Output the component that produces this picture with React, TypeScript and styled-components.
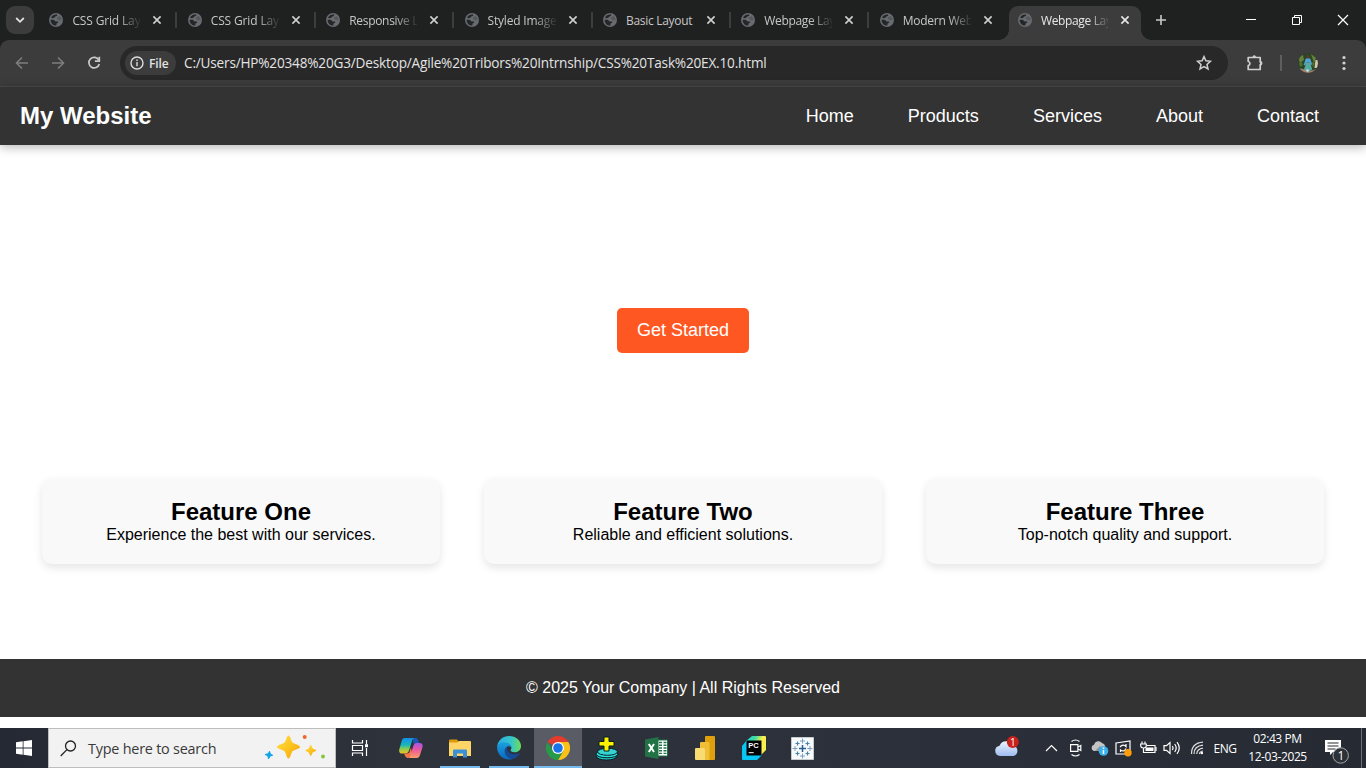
import React from 'react';
import styled, { createGlobalStyle } from 'styled-components';

const Global = createGlobalStyle`
  * { box-sizing: border-box; margin: 0; padding: 0; }
  html, body { width: 1366px; height: 768px; overflow: hidden; background: #fff; }
  svg { display: block; flex: none; }
`;

const ui = `'Open Sans', 'Noto Sans', sans-serif`;

const Screen = styled.div`
  width: 1366px;
  height: 768px;
  display: flex;
  flex-direction: column;
  overflow: hidden;
`;

/* ---------- Browser chrome ---------- */
const TabStrip = styled.div`
  height: 40px;
  flex: none;
  display: flex;
  align-items: center;
  background: #1f2020;
  padding-left: 6px;
  font-family: ${ui};
`;
const TabSearch = styled.div`
  width: 28px;
  height: 28px;
  margin-right: 6.4px;
  border-radius: 9px;
  background: #3c3c3c;
  display: flex;
  align-items: center;
  justify-content: center;
`;
const Tab = styled.div<{ $active?: boolean }>`
  position: relative;
  width: ${p => (p.$active ? 132 : 138.4)}px;
  height: ${p => (p.$active ? 34 : 40)}px;
  margin: ${p => (p.$active ? '6px 0 0 -0.2px' : '0')};
  padding: ${p => (p.$active ? '0 0 6px 9px' : '0 0 0 9px')};
  display: flex;
  align-items: center;
  flex: none;
  background: ${p => (p.$active ? '#3c3c3c' : 'transparent')};
  border-radius: 9px 9px 0 0;
  &::before, &::after {
    content: '';
    display: ${p => (p.$active ? 'block' : 'none')};
    position: absolute;
    bottom: 0;
    width: 10px;
    height: 10px;
  }
  &::before { left: -10px; background: radial-gradient(circle at 0 0, transparent 9.5px, #3c3c3c 10px); }
  &::after { right: -10px; background: radial-gradient(circle at 100% 0, transparent 9.5px, #3c3c3c 10px); }
`;
const TabTitle = styled.span<{ $active?: boolean; $spacing: number; $fade: boolean }>`
  width: ${p => (p.$active ? 67 : 68)}px;
  margin-left: 9px;
  margin-right: 12px;
  padding-top: 2px;
  overflow: hidden;
  white-space: nowrap;
  font-size: 12px;
  line-height: 16px;
  letter-spacing: ${p => p.$spacing}px;
  color: ${p => (p.$active ? '#e8e8e8' : '#c7c7c7')};
  ${p => p.$fade && 'mask-image: linear-gradient(90deg, #000 46px, transparent 70px);'}
`;
const TabDivider = styled.i`
  width: 2px;
  height: 16px;
  margin-left: 13px;
  background: #3c3d3d;
`;
const NewTab = styled.div`
  width: 14px;
  margin-left: 13px;
`;
const WindowButtons = styled.div`
  margin-left: auto;
  display: flex;
  align-items: center;
  svg { width: 46px; height: 30px; }
`;
const ToolbarBack = styled.div`
  height: 47px;
  flex: none;
  background: #1f2020;
`;
const Toolbar = styled.div`
  height: 47px;
  display: flex;
  align-items: center;
  background: #3c3c3c;
  border-radius: 9px 9px 0 0;
  border-bottom: 1px solid #4b4a4b;
  padding-left: 14px;
  font-family: ${ui};
`;
const NavIcons = styled.div`
  display: flex;
  gap: 20px;
  width: 106px;
`;
const AddressBar = styled.div`
  width: 1108px;
  height: 34px;
  display: flex;
  align-items: center;
  border-radius: 17px;
  background: #282828;
  padding: 0 15px 0 5px;
`;
const FileChip = styled.div`
  width: 51px;
  height: 24px;
  display: flex;
  align-items: center;
  gap: 5px;
  padding-left: 5px;
  border-radius: 12px;
  background: #3c3c3c;
  color: #e3e3e3;
  font-size: 12px;
  font-weight: 600;
  letter-spacing: -0.1px;
`;
const Url = styled.span`
  flex: 1;
  margin-left: 8px;
  color: #e3e3e3;
  font-size: 13.6px;
  line-height: 20px;
  letter-spacing: -0.186px;
  white-space: nowrap;
`;
const ToolbarActions = styled.div`
  display: flex;
  align-items: center;
  margin-left: 18px;
`;
const ActionDivider = styled.i`
  width: 2px;
  height: 16px;
  margin: 0 16px 0 16px;
  background: #5e5e5e;
`;

/* ---------- Web page ---------- */
const Page = styled.main`
  flex: 1;
  display: flex;
  flex-direction: column;
  background: #fff;
  font-family: Arial, 'Liberation Sans', sans-serif;
  color: #000;
`;
const Header = styled.header`
  height: 58px;
  flex: none;
  display: flex;
  justify-content: space-between;
  align-items: center;
  padding: 0 47px 0 20px;
  background: #333;
  color: #fff;
  box-shadow: 0 2px 10px rgba(0, 0, 0, 0.3);
`;
const Brand = styled.div`
  font-size: 24px;
  font-weight: bold;
  line-height: 28px;
`;
const Menu = styled.nav`
  display: flex;
  gap: 54px;
  font-size: 18px;
  line-height: 20px;
`;
const Hero = styled.section`
  height: 313px;
  flex: none;
  display: flex;
  justify-content: center;
  padding-top: 163px;
`;
const CallToAction = styled.a`
  width: 132px;
  height: 45px;
  border-radius: 5px;
  background: #ff5722;
  color: #fff;
  font-size: 18px;
  line-height: 44px;
  text-align: center;
`;
const Features = styled.section`
  height: 201px;
  flex: none;
  display: flex;
  justify-content: space-around;
  align-items: flex-start;
  padding: 20px;
`;
const Card = styled.article`
  width: 30%;
  height: 86px;
  padding: 20px;
  border-radius: 10px;
  background: #f9f9f9;
  box-shadow: 0 4px 8px rgba(0, 0, 0, 0.1);
  text-align: center;
  h2 { font-size: 24px; line-height: 27px; }
  p { padding-top: 1px; font-size: 16px; line-height: 18px; }
`;
const Footer = styled.footer`
  height: 58px;
  flex: none;
  background: #333;
  color: #fff;
  font-size: 16px;
  line-height: 57px;
  text-align: center;
`;

/* ---------- Taskbar ---------- */
const Taskbar = styled.div`
  height: 40px;
  flex: none;
  display: flex;
  align-items: stretch;
  background: linear-gradient(90deg, #242934 0, #2d323b 400px, #2b303a 900px, #252a33 1366px);
  color: #fff;
  font-family: ${ui};
`;
const StartButton = styled.div`
  width: 48px;
  display: flex;
  align-items: center;
  justify-content: center;
`;
const SearchBox = styled.div`
  width: 288px;
  display: flex;
  align-items: center;
  padding: 0 9px 0 11px;
  background: #f2f2f2;
  border: 1px solid #bdbdbd;
  color: #3a3a3a;
  font-size: 14.4px;
  letter-spacing: -0.22px;
  span { flex: 1; margin-left: 11px; }
`;
const Apps = styled.div`
  display: flex;
  gap: 1px;
`;
const TaskButton = styled.div<{ $state?: 'open' | 'active'; $gap?: number }>`
  width: 48px;
  margin-right: ${p => p.$gap ?? 0}px;
  display: flex;
  align-items: center;
  justify-content: center;
  background-color: ${p => (p.$state === 'active' ? '#595c64' : 'transparent')};
  background-image: ${p => (p.$state ? 'linear-gradient(#76b9ed, #76b9ed)' : 'none')};
  background-repeat: no-repeat;
  background-position: center bottom;
  background-size: ${p => (p.$state === 'active' ? 48 : 40)}px 2px;
`;
const Tray = styled.div`
  margin-left: auto;
  display: flex;
  align-items: center;
`;
const TrayItem = styled.div<{ $w: number }>`
  width: ${p => p.$w}px;
  display: flex;
  justify-content: center;
`;
const Language = styled.span`
  width: 32px;
  font-size: 12px;
  letter-spacing: -0.4px;
  text-align: center;
`;
const Clock = styled.div`
  width: 73px;
  font-size: 12px;
  line-height: 18px;
  letter-spacing: -0.4px;
  text-align: center;
  white-space: nowrap;
`;
const ShowDesktop = styled.i`
  align-self: stretch;
  width: 5px;
  margin-left: 2px;
  border-left: 1px solid #6b6f76;
`;

/* ---------- Icons ---------- */
const Globe = () => (
  <svg width="14" height="14" viewBox="2 2 20 20">
    <circle cx="12" cy="12" r="10" fill="#686b70" />
    <path d="M4.300 11.500h4.200c1.600 0 1.700 2.600 3.300 2.600h2.500c1.300 0 1.200 2-.1 2.300-1.300.2-1.600.8-1.600 2.300v1.200C7.600 20 4.200 16.300 4.300 11.500z" fill="#242627" />
    <path d="M5 8.500C6.500 5.700 9 4.300 12 4.100c1 0 1.800.2 1.800.2 0 2.200-.8 2.500-2.600 2.600-1.500.1-.8 2-2.200 2.100H7.500C6.800 9.200 6.500 10 5 8.500z" fill="#242627" />
    <path d="M15.500 7.500c1-.5 1.500-1.200 1.500-1.200 2 1.500 3 3.700 2.800 6.200h-3c-1.600 0-1.200-1.800-2.700-2-1.700-.2-1.300-2.400 1.400-3z" fill="#54575b" />
  </svg>
);
const Close = ({ color = '#d0d0d0' }: { color?: string }) => (
  <svg width="10" height="10" viewBox="0 0 10 10" stroke={color} strokeWidth="1.6">
    <path d="M1.400 1.400l7.200 7.200M8.600 1.400l-7.200 7.200" />
  </svg>
);
const Arrow = ({ flip }: { flip?: boolean }) => (
  <svg width="16" height="16" viewBox="0 0 16 16" fill="none" stroke="#7d7d7d" strokeWidth="1.6" transform={flip ? 'scale(-1 1)' : undefined}>
    <path d="M14 8H3M8 2.500L2.500 8 8 13.500" />
  </svg>
);
const Reload = () => (
  <svg width="16" height="16" viewBox="0 0 16 16" fill="none" stroke="#c9c9c9" strokeWidth="1.700">
    <path d="M12.800 5A5.300 5.300 0 1 0 13.300 9" />
    <path d="M13.300 1.800v4.400H8.900" />
  </svg>
);
const Info = () => (
  <svg width="14" height="14" viewBox="0 0 14 14" fill="none" stroke="#dcdcdc" strokeWidth="1.400">
    <circle cx="7" cy="7" r="6" /><path d="M7 6v4.200M7 3.500v1.500" />
  </svg>
);
const Star = () => (
  <svg width="18" height="18" viewBox="0 0 18 18" fill="none" stroke="#cfcfcf" strokeWidth="1.500">
    <path d="M9 2.600l1.900 4.200 4.500.5-3.400 3.100 1 4.600L9 12.700 5 15l1-4.600L2.600 7.300l4.500-.5z" />
  </svg>
);
const Puzzle = () => (
  <svg width="18" height="18" viewBox="0 0 18 18" fill="none" stroke="#cfcfcf" strokeWidth="1.700" strokeLinejoin="round">
    <path d="M2.200 3.500h12v4.500h1v2.500h-1v5h-12v-4c2.300-.2 2.300-3.700 0-4z" />
    <path d="M6.800 3.200c0-2.200 3-2.200 3 0zM14.500 7.700c2.200 0 2.200 3 0 3z" fill="#cfcfcf" strokeWidth=".5" />
  </svg>
);
const Avatar = () => (
  <svg width="20" height="20" viewBox="0 0 20 20">
    <clipPath id="avatar"><circle cx="10" cy="10" r="10" /></clipPath>
    <g clipPath="url(#avatar)">
      <path d="M0 0h20v20H0z" fill="#2b4428" />
      <path d="M0 4l5-2 1 5-4 3zM13 1l5 4-2 5z" fill="#66813c" />
      <path d="M1 10l3-1 1 3-3 2zM14 9l3 1-2 5z" fill="#50702f" />
      <path d="M17.500 7h3v8h-4z" fill="#d6c6ac" /><path d="M0 15l5 1 6 2 5-1 4-2v6H0z" fill="#a67e6b" />
      <circle cx="10" cy="3.500" r="1.600" fill="#5a3c2c" />
      <path d="M7.800 5.500h4.400l2 6-1.500.5-1-2.500H8.500l-1.300 3-1.500-.5z" fill="#51a4d6" />
      <path d="M8.200 9.500h4l2 7-3 2H8.500l-2.500-2z" fill="#57aaa0" />
      <circle cx="9.500" cy="17.500" r="1.200" fill="#d8e4e2" />
    </g>
  </svg>
);
const WindowsLogo = () => (
  <svg width="16" height="16" viewBox="0 0 16 16" fill="#fff">
    <path d="M0 2.200L6.700 1.300V7.500H0zM7.500 1.200L16 0v7.500H7.500zM0 8.400h6.700v6.300L0 13.800zM7.500 8.400H16V16l-8.500-1.200z" />
  </svg>
);
const SearchIcon = () => (
  <svg width="17" height="17" viewBox="0 0 17 17" fill="none" stroke="#222" strokeWidth="1.300">
    <circle cx="10.500" cy="6" r="5" /><path d="M6.900 9.600L.7 16" />
  </svg>
);
const Sparkles = () => (
  <svg width="62" height="26" viewBox="0 0 62 26">
    <defs><linearGradient id="spark" x1="0" y1="0" x2="1" y2="1"><stop stopColor="#ffe04b" /><stop offset=".55" stopColor="#fcc21b" /><stop offset="1" stopColor="#f39b13" /></linearGradient></defs>
    <path d="M24.500.5c1.800 0 2.700 5.500 4 7 1.500 1.500 7.500 2.500 7.500 4.500s-6 2.600-7.500 4.200c-1.400 1.500-2.200 7.300-4 7.300s-2.500-5.800-4-7.300C19 14.600 13 14 13 12s6-3 7.500-4.500 2.200-7 4-7z" fill="url(#spark)" />
    <path d="M46.700 10c.9 0 1.300 2.700 2 3.500.800.700 3.500 1 3.500 2s-2.700 1.200-3.500 2-1.100 3.500-2 3.500-1.200-2.700-2-3.500-3.300-1-3.300-2 2.500-1.300 3.300-2 1.100-3.500 2-3.500z" fill="url(#spark)" />
    <path d="M5.500 16c.8 0 .8 2.100 1.500 2.800s2.300 1 2 1.800-2 .4-2.700 1.100S5.500 24 4.500 24s-.5-1.900-1-2.600S.7 20.300 1 19.300s2-.3 2.800-1S4.700 16 5.500 16z" fill="#12a5e8" />
    <circle cx="40.700" cy="2" r="2" fill="#f0652b" /><circle cx="59" cy="21.500" r="2" fill="#86c540" />
  </svg>
);
const TaskView = () => (
  <svg width="18" height="16" viewBox="0 0 18 16" fill="none" stroke="#fff" strokeWidth="1.200">
    <path d="M1.500 0v3h10V0M1.500 5.500h10v5h-10zM1.500 16v-3h10v3M15.500 0v4M15.500 8v8" /><path d="M14 4.200h3v3h-3z" fill="#fff" stroke="none" />
  </svg>
);
const Copilot = () => (
  <svg width="24" height="22" viewBox="0 0 24 22">
    <defs>
      <linearGradient id="cpA" x1="0" y1="0" x2="0" y2="1"><stop stopColor="#168fe7" /><stop offset=".45" stopColor="#16b7bb" /><stop offset=".7" stopColor="#8acb50" /><stop offset="1" stopColor="#f4be24" /></linearGradient>
      <linearGradient id="cpB" x1="0" y1="0" x2="0" y2="1"><stop stopColor="#a454e8" /><stop offset=".45" stopColor="#ea59a0" /><stop offset="1" stopColor="#fc9e64" /></linearGradient>
    </defs>
    <path d="M14 1h2.500c2 0 2.500 1.500 3 3l.8 2.500h-6z" fill="#1958b9" />
    <path d="M5.800 1H16c-2 0-2.500 1.500-3 3l-3 9.500c-.7 2-1.700 3-4 3H3c-2.500 0-3.300-2-2.600-4.500l2.300-8C3.300 2 4 1 5.800 1z" fill="url(#cpA)" />
    <path d="M5 16.500h3c2 0 2.500-1 3-3l1-3 1.500 8L9 21c-2.300 0-2.700-1.800-4-4.500z" fill="#f57645" />
    <path d="M17.500 6h3.300c2.500 0 3.300 2 2.600 4.500L21 18c-.6 2-1.500 3-3.500 3H8.500c1.700 0 2.400-1.300 3-3L14.300 9c.6-2 1.400-3 3.200-3z" fill="url(#cpB)" />
  </svg>
);
const Explorer = () => (
  <svg width="22" height="19" viewBox="0 0 22 19">
    <path d="M0 1.500Q0 .5 1 .5h7l1.500 2H20v5H0z" fill="#dc9a0b" />
    <path d="M0 3.500h8.500l1.500-1.500H21q1 0 1 1V17H0z" fill="#ffd568" />
    <path d="M4 18.500v-7q0-1 1-1h12q1 0 1 1v7h-4v-4H8v4z" fill="#3b91d6" />
  </svg>
);
const Edge = () => (
  <svg width="24" height="24" viewBox="0 0 24 24">
    <defs><linearGradient id="edA"><stop stopColor="#2eaae2" /><stop offset=".6" stopColor="#35c6cb" /><stop offset="1" stopColor="#70dc53" /></linearGradient>
    <linearGradient id="edB" x1="0" y1="0" x2="0" y2="1"><stop stopColor="#1ba1df" /><stop offset="1" stopColor="#0868bd" /></linearGradient></defs>
    <path d="M.2 10C1.300 4 6 0 12 0c7 0 12 4.700 12 10 0 4-3 6.300-6.500 6.300-3 0-4-1.200-4-2 0-.6.900-1 .9-2.600C14.400 9 11.800 7 8.200 7 4.500 7 1.500 8.500.2 10z" fill="url(#edA)" />
    <path d="M.2 10C2 7 5 6 8.200 6.400c4.400.5 6.200 3 6.200 5.300-1-1.200-2.500-1.700-3.700-1.200-3.500 1.400-4 8.500 4.300 12.700C6.500 25-.8 18.700.2 10z" fill="url(#edB)" />
    <path d="M10.700 10.500c-6 3-2.700 11.500 4.300 12.700 3.500-.8 6-2.800 7.600-5.300.3-.6 0-1-.6-.6-5 2.300-10 .5-11.600-3-.5-1.300-.4-2.700.3-3.800z" fill="#164a94" />
  </svg>
);
const Chrome = () => (
  <svg width="24" height="24" viewBox="0 0 24 24">
    <path d="M12 12L1.600 6A12 12 0 0 1 22.400 6z" fill="#e33b2e" />
    <path d="M12 6h10.400A12 12 0 0 1 12 24l5.200-9z" fill="#fbc116" />
    <path d="M1.600 6A12 12 0 0 0 12 24l5.200-9L12 12 6.800 15z" fill="#269a48" />
    <circle cx="12" cy="12" r="6" fill="#fff" /><circle cx="12" cy="12" r="4.800" fill="#1a73e8" />
  </svg>
);
const DiscPlus = () => (
  <svg width="25" height="25" viewBox="0 0 25 25" stroke="#071e20" strokeWidth="1">
    <ellipse cx="11.500" cy="20.500" rx="10" ry="3.500" fill="#22c9c9" /><ellipse cx="12" cy="18" rx="11" ry="3.800" fill="#29e0df" /><ellipse cx="12.500" cy="15.800" rx="10" ry="3.500" fill="#37d3d3" />
    <path d="M9 1h5v4.500h5V10h-5v5H9v-5H4V5.500h5z" fill="#fff200" />
  </svg>
);
const Excel = () => (
  <svg width="23" height="22" viewBox="0 0 23 22">
    <path d="M12 3h10.500v16H12z" fill="#fff" stroke="#217346" />
    <path d="M14 5.500h3M18.500 5.500h3M14 8.200h3M18.500 8.200h3M14 11h3M18.500 11h3M14 13.700h3M18.500 13.700h3M14 16.400h3M18.500 16.400h3" stroke="#217346" strokeWidth="1.400" />
    <path d="M0 2.500L13.500 0v22L0 19.500z" fill="#217346" />
    <path d="M3.800 7l5.200 8M9 7l-5.200 8" stroke="#fff" strokeWidth="2" />
  </svg>
);
const PowerBi = () => (
  <svg width="20" height="24" viewBox="0 0 20 24">
    <path d="M10 1q0-1 1-1h8q1 0 1 1v22q0 1-1 1h-9z" fill="#dfa00c" />
    <path d="M5 7q0-1 1-1h7q1.500 0 1.500 1.500V24H5z" fill="#f0bf37" />
    <path d="M0 13q0-1 1-1h7.500q1.500 0 1.500 1.500V24H1q-1 0-1-1z" fill="#f8dc72" />
  </svg>
);
const MonoLabel = styled.text`
  font: bold 7.500px 'Liberation Sans', sans-serif;
`;
const PyCharm = () => (
  <svg width="24" height="24" viewBox="0 0 24 24">
    <defs><linearGradient id="pyc" x1="0" y1="0" x2="1" y2=".5"><stop stopColor="#10d2ee" /><stop offset=".4" stopColor="#40dda0" /><stop offset=".7" stopColor="#f6ef4d" /></linearGradient></defs>
    <path d="M10 0h13q1 0 1 1v13l-6 6L4 5z" fill="url(#pyc)" />
    <path d="M5 4L0 10v13q0 1 1 1h14l5-5z" fill="#08c6f4" />
    <path d="M4.500 4.500h15v15h-15z" fill="#000" />
    <MonoLabel x="6.300" y="12.300" fill="#fff">PC</MonoLabel><path d="M6.700 16.700h5" stroke="#fff" />
  </svg>
);
const Tableau = () => (
  <svg width="24" height="23" viewBox="0 0 24 23" fill="none">
    <path d="M.5.500h22v22H.5z" fill="#f7f9fb" stroke="#c6cbd0" />
    <path d="M11.500 8v7M8 11.500h7" stroke="#285d91" strokeWidth="1.500" />
    <path d="M11.500 1.500v5M9 4h5M11.500 16.500v5M9 19h5M4 9v5M1.500 11.500h5M19 9v5M16.500 11.500h5" stroke="#7c9fc0" />
    <path d="M6.500 4.500v4M4.500 6.500h4M16.500 4.500v4M14.500 6.500h4M6.500 14.500v4M4.500 16.500h4M16.500 14.500v4M14.500 16.500h4" stroke="#4386ad" strokeWidth="1.200" />
  </svg>
);
const BadgeLabel = styled.text<{ $size?: number }>`
  font: ${p => p.$size ?? 10}px 'Open Sans', sans-serif;
`;
const Weather = () => (
  <svg width="26" height="24" viewBox="0 -1 26 24">
    <defs><linearGradient id="cloud" x1="0" y1="0" x2="0" y2="1"><stop stopColor="#eef4ff" /><stop offset="1" stopColor="#9dbcf0" /></linearGradient></defs>
    <path d="M6 19a5.200 5.200 0 0 1-.5-10.300A7.500 7.500 0 0 1 19 8.500 5.400 5.400 0 0 1 19.500 19z" fill="url(#cloud)" />
    <circle cx="18.800" cy="5" r="6" fill="#c9221b" /><BadgeLabel x="16" y="8.700" fill="#fff">1</BadgeLabel>
  </svg>
);
const tray = { fill: 'none', stroke: '#fff', strokeWidth: 1.2 };
const Chevron = () => <svg width="13" height="8" viewBox="0 0 13 8" {...tray}><path d="M1 7l5.500-5.500L12 7" /></svg>;
const MeetNow = () => (
  <svg width="14" height="18" viewBox="0 0 14 18" {...tray}><path d="M2.500 2.500Q6.500-.5 10.500 2.500M2.500 15.500q4 3 8 0M1.600 5.600h7.300v6.800H1.600zM9 8l2.800-1.500v5L9 10" /></svg>
);
const CloudInfo = () => (
  <svg width="18" height="16" viewBox="0 0 18 16">
    <path d="M3 11A3.200 3.200 0 0 1 3 4.800 4.500 4.500 0 0 1 11 3a4 4 0 0 1 3 5v3z" fill="#c4c4c4" /><path d="M4 11l5-5 6 5z" fill="#8f9296" />
    <circle cx="12.500" cy="11" r="4.800" fill="#39b1ec" /><path d="M12.500 10v4M12.500 7.500V9" stroke="#fff" strokeWidth="1.500" />
  </svg>
);
const Sync = () => (
  <svg width="18" height="17" viewBox="0 0 18 17" {...tray}>
    <path d="M1 3l14-2v13L1 14z" /><path d="M5 7q3-3.500 6-.5V4M11 8.500q-2 4-5.500 1.500V12" /><circle cx="13" cy="12.700" r="3.700" fill="#ff9d0b" stroke="none" />
  </svg>
);
const Battery = () => (
  <svg width="17" height="14" viewBox="0 0 17 14" {...tray}><path d="M2 .5V3M5 .5V3M.7 3h5.600v2Q6 7 3.500 7T.7 5zM3.500 7v4.500H15v-7H7" /><path d="M6 6.500h7.500v3.500H5.500V8z" fill="#fff" stroke="none" /><path d="M16 6v4" /></svg>
);
const Volume = () => (
  <svg width="18" height="14" viewBox="0 0 18 14" {...tray}><path d="M1 4.700h2.500L7 1.500v11L3.500 9.300H1zM9.300 5q1.500 2 0 4M11.700 3q3 4 0 8M14 1.200q4.500 5.800 0 11.600" /></svg>
);
const Wifi = () => (
  <svg width="14" height="14" viewBox="0 0 14 14" {...tray} stroke="#dedede"><path d="M1.500 13Q1.500 2 13 1.200M4 13Q4 5 13 4.200M6.700 13Q7 8 13 7.200M9.500 13q0-2.500 3.500-3" /><circle cx="11.800" cy="12" r="1.300" fill="#fff" stroke="none" /></svg>
);
const Notifications = () => (
  <svg width="26" height="32" viewBox="0 0 26 32">
    <path d="M1 8h16v12H9l-3 3v-3H1z" fill="#fff" /><path d="M3.500 11h11M3.500 14h11M3.500 17h8" stroke="#292d34" strokeWidth="1.200" />
    <circle cx="16.700" cy="23.500" r="7.700" fill="#2c3037" stroke="#a7a8aa" /><BadgeLabel $size={12} x="13.400" y="28" fill="#fff">1</BadgeLabel>
  </svg>
);

const tabs: { title: string; spacing: number; fade: boolean }[] = [
  { title: 'CSS Grid Layout', spacing: -0.15, fade: true },
  { title: 'CSS Grid Layout', spacing: -0.15, fade: true },
  { title: 'Responsive Layout', spacing: -0.3, fade: true },
  { title: 'Styled Images', spacing: -0.2, fade: true },
  { title: 'Basic Layout', spacing: -0.3, fade: false },
  { title: 'Webpage Layout', spacing: -0.35, fade: true },
  { title: 'Modern Web', spacing: -0.25, fade: true },
];

const features = [
  ['Feature One', 'Experience the best with our services.'],
  ['Feature Two', 'Reliable and efficient solutions.'],
  ['Feature Three', 'Top-notch quality and support.'],
];

export default function App() {
  return (
    <Screen>
      <Global />
      <TabStrip>
        <TabSearch>
          <svg width="10" height="8" viewBox="0 0 10 8" fill="none" stroke="#e0e0e0" strokeWidth="1.800"><path d="M1.200 2L5 5.800 8.800 2" /></svg>
        </TabSearch>
        {tabs.map((t, i) => (
          <Tab key={i}>
            <Globe />
            <TabTitle $spacing={t.spacing} $fade={t.fade}>{t.title}</TabTitle>
            <Close />
            {i < tabs.length - 1 && <TabDivider />}
          </Tab>
        ))}
        <Tab $active>
          <Globe />
          <TabTitle $active $spacing={-0.35} $fade>Webpage Layout</TabTitle>
          <Close color="#e8e8e8" />
        </Tab>
        <NewTab>
          <svg width="14" height="14" viewBox="0 0 14 14" stroke="#c9c9c9" strokeWidth="1.600"><path d="M7 2v10M2 7h10" /></svg>
        </NewTab>
        <WindowButtons>
          <svg viewBox="0 0 46 30" stroke="#fff"><path d="M18 14.500h10" /></svg>
          <svg viewBox="0 0 46 30" stroke="#fff" fill="none"><path d="M18.500 12.500h7v7h-7zM20.500 12.500v-2h7v7h-2" /></svg>
          <svg viewBox="0 0 46 30" stroke="#fff" strokeWidth="1.200"><path d="M18 10l10 10M28 10L18 20" /></svg>
        </WindowButtons>
      </TabStrip>
      <ToolbarBack>
        <Toolbar>
          <NavIcons><Arrow /><Arrow flip /><Reload /></NavIcons>
          <AddressBar>
            <FileChip><Info />File</FileChip>
            <Url>C:/Users/HP%20348%20G3/Desktop/Agile%20Tribors%20Intrnship/CSS%20Task%20EX.10.html</Url>
            <Star />
          </AddressBar>
          <ToolbarActions>
            <Puzzle />
            <ActionDivider />
            <Avatar />
            <svg width="32" height="16" viewBox="0 0 32 16" fill="#d2d2d2"><circle cx="26" cy="2.500" r="1.600" /><circle cx="26" cy="8" r="1.600" /><circle cx="26" cy="13.500" r="1.600" /></svg>
          </ToolbarActions>
        </Toolbar>
      </ToolbarBack>

      <Page>
        <Header>
          <Brand>My Website</Brand>
          <Menu>
            {['Home', 'Products', 'Services', 'About', 'Contact'].map(l => <a key={l}>{l}</a>)}
          </Menu>
        </Header>
        <Hero><CallToAction>Get Started</CallToAction></Hero>
        <Features>
          {features.map(([title, text]) => (
            <Card key={title}><h2>{title}</h2><p>{text}</p></Card>
          ))}
        </Features>
        <Footer>© 2025 Your Company | All Rights Reserved</Footer>
      </Page>

      <Taskbar>
        <StartButton><WindowsLogo /></StartButton>
        <SearchBox><SearchIcon /><span>Type here to search</span><Sparkles /></SearchBox>
        <Apps>
          <TaskButton $gap={2}><TaskView /></TaskButton>
          <TaskButton><Copilot /></TaskButton>
          <TaskButton $state="open"><Explorer /></TaskButton>
          <TaskButton $state="open"><Edge /></TaskButton>
          <TaskButton $state="active"><Chrome /></TaskButton>
          <TaskButton><DiscPlus /></TaskButton>
          <TaskButton><Excel /></TaskButton>
          <TaskButton><PowerBi /></TaskButton>
          <TaskButton><PyCharm /></TaskButton>
          <TaskButton><Tableau /></TaskButton>
        </Apps>
        <Tray>
          <TrayItem $w={62}><Weather /></TrayItem>
          <TrayItem $w={26}><Chevron /></TrayItem>
          <TrayItem $w={24}><MeetNow /></TrayItem>
          <TrayItem $w={24}><CloudInfo /></TrayItem>
          <TrayItem $w={24}><Sync /></TrayItem>
          <TrayItem $w={24}><Battery /></TrayItem>
          <TrayItem $w={24}><Volume /></TrayItem>
          <TrayItem $w={25}><Wifi /></TrayItem>
          <Language>ENG</Language>
          <Clock>02:43 PM<br />12-03-2025</Clock>
          <TrayItem $w={45}><Notifications /></TrayItem>
          <ShowDesktop />
        </Tray>
      </Taskbar>
    </Screen>
  );
}
